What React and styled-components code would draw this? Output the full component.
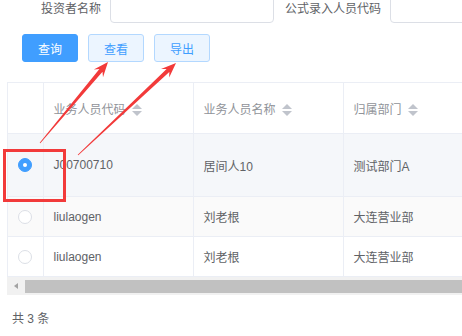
import React from 'react';
import styled, { createGlobalStyle } from 'styled-components';

const GlobalStyle = createGlobalStyle`
  body {
    margin: 0;
    background: #fff;
    font-family: "Liberation Sans", "Noto Sans CJK SC", sans-serif;
    font-size: 12px;
    color: #606266;
  }
`;

const Page = styled.div`
  position: relative;
  width: 462px;
  height: 336px;
  overflow: hidden;
`;

const FormRow = styled.div`
  display: flex;
  align-items: center;
  margin-top: -9px;
  height: 32px;
`;

const Label = styled.label`
  width: ${p => p.$w}px;
  padding-right: 9px;
  box-sizing: border-box;
  text-align: right;
  font-size: 12px;
  color: #606266;
  flex-shrink: 0;
`;

const Input = styled.div`
  width: ${p => p.$w}px;
  height: 32px;
  box-sizing: border-box;
  border: 1px solid #dcdfe6;
  border-radius: 4px;
  flex-shrink: 0;
`;

const Toolbar = styled.div`
  display: flex;
  gap: 10px;
  padding-left: 22px;
  margin-top: 11px;
`;

const Button = styled.button`
  width: 56px;
  height: 28px;
  border-radius: 3px;
  font-family: inherit;
  font-size: 12px;
  border: 1px solid ${p => (p.$primary ? '#409eff' : '#b3d8ff')};
  background: ${p => (p.$primary ? '#409eff' : '#ecf5ff')};
  color: ${p => (p.$primary ? '#fff' : '#409eff')};
  padding: 0;
`;

const TableWrap = styled.div`
  margin-left: 7px;
  margin-top: 20px;
  width: 600px;
  border-top: 1px solid #ebeef5;
  border-left: 1px solid #ebeef5;
`;

const Table = styled.table`
  border-collapse: collapse;
  table-layout: fixed;
  width: 600px;
`;

const HeadCell = styled.th`
  height: 50px;
  padding: 0 0 0 10px;
  text-align: left;
  font-weight: normal;
  color: #909399;
  font-size: 12px;
  border-right: 1px solid #ebeef5;
  border-bottom: 1px solid #ebeef5;
  background: #fff;
  white-space: nowrap;
`;

const Row = styled.tr`
  height: ${p => p.$h}px;
  background: ${p => p.$bg};
`;

const Cell = styled.td`
  padding: 0 0 0 10px;
  color: #606266;
  font-size: 12px;
  border-right: 1px solid #ebeef5;
  border-bottom: 1px solid #ebeef5;
  white-space: nowrap;
`;

const RadioCell = styled(Cell)`
  padding: 0;
  text-align: center;
`;

const Radio = styled.span`
  display: inline-block;
  vertical-align: middle;
  width: 14px;
  height: 14px;
  box-sizing: border-box;
  border-radius: 50%;
  border: 1px solid ${p => (p.$on ? '#409eff' : '#dcdfe6')};
  background: ${p => (p.$on ? '#409eff' : '#fff')};
  position: relative;
  &::after {
    content: '';
    display: ${p => (p.$on ? 'block' : 'none')};
    position: absolute;
    left: 50%;
    top: 50%;
    width: 4px;
    height: 4px;
    margin: -2px 0 0 -2px;
    border-radius: 50%;
    background: #fff;
  }
`;

const Caret = styled.span`
  display: inline-flex;
  flex-direction: column;
  gap: 2px;
  vertical-align: middle;
  margin-left: 6px;
  &::before,
  &::after {
    content: '';
    display: block;
    border-left: 5px solid transparent;
    border-right: 5px solid transparent;
  }
  &::before {
    border-bottom: 5px solid #c0c4cc;
  }
  &::after {
    border-top: 5px solid #c0c4cc;
  }
`;

const ScrollBar = styled.div`
  display: flex;
  align-items: center;
  height: 18px;
  background: #f1f1f1;
  width: 600px;
  margin-left: 7px;
`;

const ScrollArrow = styled.span`
  width: 18px;
  display: flex;
  justify-content: center;
  &::before {
    content: '';
    border-top: 3px solid transparent;
    border-bottom: 3px solid transparent;
    border-right: 4px solid #a3a3a3;
  }
`;

const Thumb = styled.div`
  flex: 1;
  height: 13px;
  background: #c1c1c1;
`;

const Total = styled.div`
  margin: 15px 0 0 12px;
  font-size: 12px;
  color: #606266;
  line-height: 18px;
`;

const Overlay = styled.svg`
  position: absolute;
  left: 0;
  top: 0;
  pointer-events: none;
`;

function arrowPoints(x1, y1, x2, y2) {
  const dx = x2 - x1;
  const dy = y2 - y1;
  const len = Math.hypot(dx, dy);
  const ux = dx / len;
  const uy = dy / len;
  const nx = -uy;
  const ny = ux;
  const headLen = 15;
  const headW = 6;
  const shaftW = 2;
  const bx = x2 - ux * headLen;
  const by = y2 - uy * headLen;
  const sx = x2 - ux * (headLen - 4);
  const sy = y2 - uy * (headLen - 4);
  const pts = [
    [x1 + nx * 0.4, y1 + ny * 0.4],
    [sx + nx * shaftW, sy + ny * shaftW],
    [bx + nx * headW, by + ny * headW],
    [x2, y2],
    [bx - nx * headW, by - ny * headW],
    [sx - nx * shaftW, sy - ny * shaftW],
    [x1 - nx * 0.4, y1 - ny * 0.4],
  ];
  return pts.map(p => p.map(v => v.toFixed(1)).join(',')).join(' ');
}

const rows = [
  { code: 'J00700710', name: '居间人10', dept: '测试部门A', h: 63, bg: '#f5f7fa', on: true },
  { code: 'liulaogen', name: '刘老根', dept: '大连营业部', h: 40, bg: '#fafafa', on: false },
  { code: 'liulaogen', name: '刘老根', dept: '大连营业部', h: 40, bg: '#fff', on: false },
];

export default function App() {
  return (
    <Page>
      <GlobalStyle />
      <FormRow>
        <Label $w={110}>投资者名称</Label>
        <Input $w={164} />
        <Label $w={116}>公式录入人员代码</Label>
        <Input $w={100} />
      </FormRow>
      <Toolbar>
        <Button $primary>查询</Button>
        <Button>查看</Button>
        <Button>导出</Button>
      </Toolbar>
      <TableWrap>
        <Table>
          <colgroup>
            <col style={{ width: 35 }} />
            <col style={{ width: 150 }} />
            <col style={{ width: 150 }} />
            <col style={{ width: 150 }} />
            <col />
          </colgroup>
          <thead>
            <tr>
              <HeadCell />
              <HeadCell>业务人员代码<Caret /></HeadCell>
              <HeadCell>业务人员名称<Caret /></HeadCell>
              <HeadCell>归属部门<Caret /></HeadCell>
              <HeadCell />
            </tr>
          </thead>
          <tbody>
            {rows.map((r, i) => (
              <Row key={i} $h={r.h} $bg={r.bg}>
                <RadioCell><Radio $on={r.on} /></RadioCell>
                <Cell>{r.code}</Cell>
                <Cell>{r.name}</Cell>
                <Cell>{r.dept}</Cell>
                <Cell />
              </Row>
            ))}
          </tbody>
        </Table>
      </TableWrap>
      <ScrollBar>
        <ScrollArrow />
        <Thumb />
      </ScrollBar>
      <Total>共 3 条</Total>
      <Overlay width="462" height="336">
        <rect x="4.5" y="150.5" width="60" height="50" fill="none" stroke="#f23a3a" strokeWidth="3" />
        <polygon points={arrowPoints(40, 143, 108, 62)} fill="#f23a3a" />
        <polygon points={arrowPoints(78, 155, 176, 63)} fill="#f23a3a" />
      </Overlay>
    </Page>
  );
}
